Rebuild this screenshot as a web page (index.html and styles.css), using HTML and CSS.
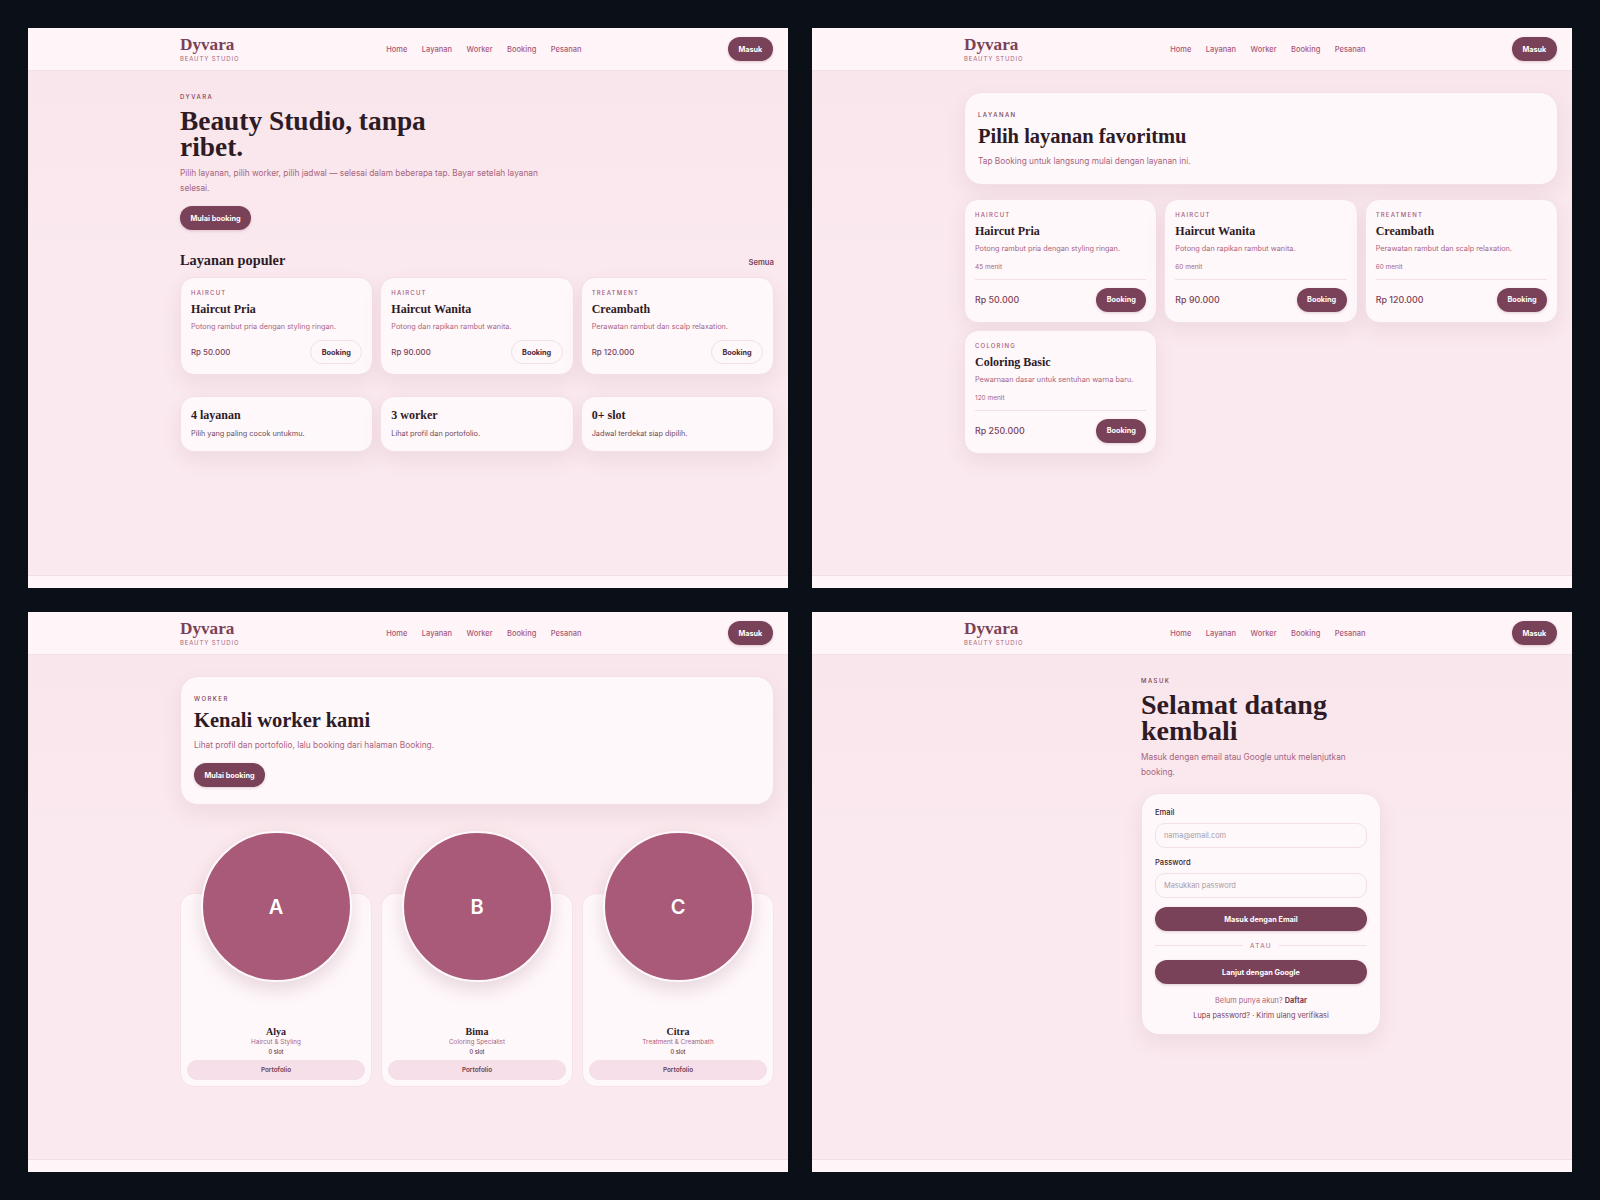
FILE: index.html
```html
<!DOCTYPE html>
<html lang="id">
<head>
    <meta charset="UTF-8">
    <title>Dyvara Beauty Studio</title>
    <link rel="stylesheet" href="styles.css">
</head>
<body>
    <div class="board">

        <!-- Home -->
        <section class="panel">
            <header class="topbar">
                <div class="brand"><div class="brand-name">Dyvara</div><div class="brand-sub">BEAUTY STUDIO</div></div>
                <nav class="nav"><a>Home</a><a>Layanan</a><a>Worker</a><a>Booking</a><a>Pesanan</a></nav>
                <button class="btn">Masuk</button>
            </header>
            <main class="content home">
                <div class="eyebrow">DYVARA</div>
                <h1 class="title">Beauty Studio, tanpa ribet.</h1>
                <p class="lead">Pilih layanan, pilih worker, pilih jadwal — selesai dalam beberapa tap. Bayar setelah layanan selesai.</p>
                <button class="btn btn-start">Mulai booking</button>
                <div class="section-head">
                    <h2>Layanan populer</h2>
                    <a>Semua</a>
                </div>
                <div class="grid-three">
                    <div class="card popular">
                        <div class="cat">HAIRCUT</div>
                        <h3>Haircut Pria</h3>
                        <p class="desc">Potong rambut pria dengan styling ringan.</p>
                        <div class="card-foot"><span class="price">Rp 50.000</span><button class="btn btn-ghost">Booking</button></div>
                    </div>
                    <div class="card popular">
                        <div class="cat">HAIRCUT</div>
                        <h3>Haircut Wanita</h3>
                        <p class="desc">Potong dan rapikan rambut wanita.</p>
                        <div class="card-foot"><span class="price">Rp 90.000</span><button class="btn btn-ghost">Booking</button></div>
                    </div>
                    <div class="card popular">
                        <div class="cat">TREATMENT</div>
                        <h3>Creambath</h3>
                        <p class="desc">Perawatan rambut dan scalp relaxation.</p>
                        <div class="card-foot"><span class="price">Rp 120.000</span><button class="btn btn-ghost">Booking</button></div>
                    </div>
                </div>
                <div class="grid-three stats">
                    <div class="card stat"><h3>4 layanan</h3><p>Pilih yang paling cocok untukmu.</p></div>
                    <div class="card stat"><h3>3 worker</h3><p>Lihat profil dan portofolio.</p></div>
                    <div class="card stat"><h3>0+ slot</h3><p>Jadwal terdekat siap dipilih.</p></div>
                </div>
            </main>
            <footer class="bottom"></footer>
        </section>

        <!-- Layanan -->
        <section class="panel">
            <header class="topbar">
                <div class="brand"><div class="brand-name">Dyvara</div><div class="brand-sub">BEAUTY STUDIO</div></div>
                <nav class="nav"><a>Home</a><a>Layanan</a><a>Worker</a><a>Booking</a><a>Pesanan</a></nav>
                <button class="btn">Masuk</button>
            </header>
            <main class="content">
                <div class="hero hero-services">
                    <div class="eyebrow">LAYANAN</div>
                    <h1 class="hero-title">Pilih layanan favoritmu</h1>
                    <p class="hero-lead">Tap Booking untuk langsung mulai dengan layanan ini.</p>
                </div>
                <div class="grid-three services">
                    <div class="card service">
                        <div class="cat">HAIRCUT</div>
                        <h3>Haircut Pria</h3>
                        <p class="desc">Potong rambut pria dengan styling ringan.</p>
                        <p class="mins">45 menit</p>
                        <div class="card-foot"><span class="price">Rp 50.000</span><button class="btn">Booking</button></div>
                    </div>
                    <div class="card service">
                        <div class="cat">HAIRCUT</div>
                        <h3>Haircut Wanita</h3>
                        <p class="desc">Potong dan rapikan rambut wanita.</p>
                        <p class="mins">60 menit</p>
                        <div class="card-foot"><span class="price">Rp 90.000</span><button class="btn">Booking</button></div>
                    </div>
                    <div class="card service">
                        <div class="cat">TREATMENT</div>
                        <h3>Creambath</h3>
                        <p class="desc">Perawatan rambut dan scalp relaxation.</p>
                        <p class="mins">60 menit</p>
                        <div class="card-foot"><span class="price">Rp 120.000</span><button class="btn">Booking</button></div>
                    </div>
                    <div class="card service">
                        <div class="cat">COLORING</div>
                        <h3>Coloring Basic</h3>
                        <p class="desc">Pewarnaan dasar untuk sentuhan warna baru.</p>
                        <p class="mins">120 menit</p>
                        <div class="card-foot"><span class="price">Rp 250.000</span><button class="btn">Booking</button></div>
                    </div>
                </div>
            </main>
            <footer class="bottom"></footer>
        </section>

        <!-- Worker -->
        <section class="panel">
            <header class="topbar">
                <div class="brand"><div class="brand-name">Dyvara</div><div class="brand-sub">BEAUTY STUDIO</div></div>
                <nav class="nav"><a>Home</a><a>Layanan</a><a>Worker</a><a>Booking</a><a>Pesanan</a></nav>
                <button class="btn">Masuk</button>
            </header>
            <main class="content">
                <div class="hero">
                    <div class="eyebrow">WORKER</div>
                    <h1 class="hero-title">Kenali worker kami</h1>
                    <p class="hero-lead">Lihat profil dan portofolio, lalu booking dari halaman Booking.</p>
                    <button class="btn btn-hero">Mulai booking</button>
                </div>
                <div class="workers">
                    <div class="worker">
                        <div class="avatar">A</div>
                        <div class="worker-name">Alya</div>
                        <div class="worker-role">Haircut &amp; Styling</div>
                        <div class="worker-slot">0 slot</div>
                        <button class="btn-soft">Portofolio</button>
                    </div>
                    <div class="worker">
                        <div class="avatar">B</div>
                        <div class="worker-name">Bima</div>
                        <div class="worker-role">Coloring Specialist</div>
                        <div class="worker-slot">0 slot</div>
                        <button class="btn-soft">Portofolio</button>
                    </div>
                    <div class="worker">
                        <div class="avatar">C</div>
                        <div class="worker-name">Citra</div>
                        <div class="worker-role">Treatment &amp; Creambath</div>
                        <div class="worker-slot">0 slot</div>
                        <button class="btn-soft">Portofolio</button>
                    </div>
                </div>
            </main>
            <footer class="bottom"></footer>
        </section>

        <!-- Masuk -->
        <section class="panel">
            <header class="topbar">
                <div class="brand"><div class="brand-name">Dyvara</div><div class="brand-sub">BEAUTY STUDIO</div></div>
                <nav class="nav"><a>Home</a><a>Layanan</a><a>Worker</a><a>Booking</a><a>Pesanan</a></nav>
                <button class="btn">Masuk</button>
            </header>
            <main class="content">
                <div class="login">
                    <div class="eyebrow">MASUK</div>
                    <h1 class="title">Selamat datang kembali</h1>
                    <p class="lead">Masuk dengan email atau Google untuk melanjutkan booking.</p>
                    <form class="card login-card">
                        <label class="field-label">Email</label>
                        <input class="field" type="text" placeholder="nama@email.com">
                        <label class="field-label">Password</label>
                        <input class="field" type="text" placeholder="Masukkan password">
                        <button class="btn btn-wide" type="button">Masuk dengan Email</button>
                        <div class="divider">ATAU</div>
                        <button class="btn btn-wide" type="button">Lanjut dengan Google</button>
                        <p class="login-note">Belum punya akun? <b>Daftar</b></p>
                        <p class="login-links">Lupa password? · Kirim ulang verifikasi</p>
                    </form>
                </div>
            </main>
            <footer class="bottom"></footer>
        </section>

    </div>
</body>
</html>
```

FILE: styles.css
```css
/* General Styles */
* {
    box-sizing: border-box;
    margin: 0;
    padding: 0;
    font-family: 'Inter', 'Liberation Sans', sans-serif;
}

body {
    background-color: #0a0f18;
    color: #2e1b26;
    width: 1600px;
    height: 1200px;
    overflow: hidden;
}

.board {
    display: grid;
    grid-template-columns: 760px 760px;
    grid-template-rows: 560px 560px;
    gap: 24px;
    padding: 28px;
}

.panel {
    display: flex;
    flex-direction: column;
    overflow: hidden;
    background-color: #fae9ee;
}

/* Top bar */
.topbar {
    display: flex;
    justify-content: space-between;
    align-items: center;
    height: 43px;
    padding: 0 15px 0 152px;
    background-color: #fff5f8;
    border-bottom: 1px solid #f3dfe7;
}

.brand {
    width: 60px;
    white-space: nowrap;
}

.brand-name {
    font-family: 'Liberation Serif', serif;
    font-weight: 700;
    font-size: 17.2px;
    line-height: 19px;
    color: #7a4259;
}

.brand-sub {
    font-size: 6px;
    line-height: 9px;
    letter-spacing: 0.14em;
    color: #a8647f;
}

.nav {
    display: flex;
    gap: 14.5px;
}

.nav a {
    font-size: 7.5px;
    font-weight: 500;
    color: #a8587a;
}

.btn {
    height: 24px;
    padding: 0 10.7px;
    border: none;
    border-radius: 12px;
    background-color: #7a4259;
    color: #fff;
    font-size: 7.3px;
    font-weight: 700;
    box-shadow: 0 1px 3px rgba(122, 66, 89, 0.25);
}

/* Main area */
.content {
    flex: 1;
    padding: 21px 14px 0 152px;
    background: linear-gradient(#f9e6ec, #fae9ee 200px);
}

.eyebrow {
    font-size: 6px;
    font-weight: 500;
    line-height: 10px;
    letter-spacing: 0.24em;
    color: #7a4259;
}

.title {
    width: 300px;
    margin-top: 6px;
    font-family: 'Liberation Serif', serif;
    font-size: 27.4px;
    font-weight: 700;
    line-height: 26px;
    color: #2e1b26;
}

.lead {
    width: 360px;
    margin-top: 6px;
    font-size: 8.3px;
    line-height: 15px;
    color: #a8647f;
}

.btn-start {
    display: block;
    margin-top: 10px;
    width: 71px;
    padding: 0;
}

.section-head {
    display: flex;
    justify-content: space-between;
    align-items: flex-end;
    margin-top: 20px;
    margin-bottom: 7px;
}

.section-head h2 {
    font-family: 'Liberation Serif', serif;
    font-size: 14.3px;
    line-height: 20px;
    font-weight: 700;
}

.section-head a {
    font-size: 7.7px;
    font-weight: 600;
    line-height: 14px;
    color: #7a4259;
}

.grid-three {
    display: grid;
    grid-template-columns: repeat(3, 1fr);
    gap: 7px;
}

.card {
    background-color: #fff8fb;
    border: 1px solid #f3dfe7;
    border-radius: 14px;
    box-shadow: 0 8px 20px rgba(122, 66, 89, 0.09);
}

.cat {
    font-size: 6px;
    line-height: 10px;
    font-weight: 500;
    letter-spacing: 0.2em;
    color: #a8587a;
}

.card h3 {
    font-family: 'Liberation Serif', serif;
    font-weight: 700;
    color: #2e1b26;
}

.desc {
    font-size: 7.3px;
    color: #a8647f;
}

.price {
    font-weight: 500;
    color: #7a4259;
}

.card-foot {
    display: flex;
    justify-content: space-between;
    align-items: center;
}

.popular {
    height: 98px;
    padding: 10px 10px 0;
}

.popular h3 {
    margin-top: 3px;
    font-size: 12px;
    line-height: 16px;
}

.popular .desc {
    margin-top: 3px;
    line-height: 14px;
}

.popular .card-foot {
    margin-top: 6px;
}

.popular .price {
    font-size: 7.9px;
}

.btn-ghost {
    width: 52px;
    padding: 0;
    background-color: #fff8fb;
    border: 1px solid #f3dfe7;
    color: #4a2a3a;
    box-shadow: none;
}

.stats {
    margin-top: 21px;
}

.stat {
    height: 56px;
    padding: 10px;
}

.stat h3 {
    font-size: 12px;
    line-height: 16px;
}

.stat p {
    margin-top: 5px;
    font-size: 7.3px;
    line-height: 12px;
    color: #6d4a5a;
}

.bottom {
    height: 13px;
    background-color: #fff5f8;
    border-top: 1px solid #f3dfe7;
}

/* Page hero */
.hero {
    height: 129px;
    padding: 17px 13px 0;
    background-color: #fff8fb;
    border: 1px solid #f3dfe7;
    border-radius: 18px;
    box-shadow: 0 8px 20px rgba(122, 66, 89, 0.09);
}

.hero-services {
    height: 93px;
}

.hero-title {
    margin-top: 3px;
    font-family: 'Liberation Serif', serif;
    font-size: 20.5px;
    line-height: 26px;
    font-weight: 700;
}

.hero-lead {
    margin-top: 5px;
    font-size: 8.3px;
    line-height: 14px;
    color: #a8647f;
}

.btn-hero {
    display: block;
    width: 71px;
    padding: 0;
    margin-top: 11px;
}

/* Service cards */
.services {
    margin-top: 13.5px;
}

.service {
    height: 124px;
    padding: 10px 10px 0;
}

.service h3 {
    margin-top: 3px;
    font-size: 12px;
    line-height: 16px;
}

.service .desc {
    margin-top: 3px;
    line-height: 14px;
}

.mins {
    margin-top: 5px;
    font-size: 6.5px;
    line-height: 12px;
    color: #a8647f;
}

.service .card-foot {
    margin-top: 6px;
    padding-top: 8px;
    border-top: 1px solid #f3dfe7;
}

.service .price {
    font-size: 8.9px;
}

.service .btn {
    width: 50px;
    padding: 0;
}

/* Worker cards */
.workers {
    display: grid;
    grid-template-columns: repeat(3, 1fr);
    gap: 9px;
    margin-top: 88px;
}

.worker {
    height: 194px;
    padding: 0 6px;
    text-align: center;
    background-color: #fff8fb;
    border: 1px solid #f6e3ea;
    border-radius: 14px;
}

.avatar {
    display: flex;
    justify-content: center;
    align-items: center;
    width: 151px;
    height: 151px;
    margin: -63px auto 0;
    border: 2px solid #fff8fb;
    border-radius: 50%;
    background-color: #a85a78;
    box-shadow: 0 8px 18px rgba(122, 66, 89, 0.18);
    color: #fff;
    font-size: 20px;
    font-weight: 600;
}

.worker-name {
    margin-top: 43px;
    font-family: 'Liberation Serif', serif;
    font-size: 10px;
    font-weight: 700;
    line-height: 13px;
}

.worker-role {
    font-size: 6.35px;
    line-height: 9px;
    color: #a8647f;
}

.worker-slot {
    font-size: 5.7px;
    line-height: 9px;
    font-weight: 500;
    color: #5d3a4a;
}

.btn-soft {
    display: block;
    width: 100%;
    height: 20px;
    margin-top: 4px;
    border: 1px solid #f3dfe7;
    border-radius: 10px;
    background-color: #f6dfe8;
    color: #6d3f54;
    font-size: 6.4px;
    font-weight: 600;
}

/* Login */
.login {
    width: 240px;
    margin: 0 auto;
}

.login .title {
    width: 215px;
    font-size: 28px;
}

.login .lead {
    width: 215px;
}

.login-card {
    margin-top: 13px;
    padding: 13px;
    border-radius: 18px;
    height: 242px;
}

.field-label {
    display: block;
    font-size: 7.6px;
    font-weight: 500;
    line-height: 12px;
    color: #3e2531;
}

.field {
    display: block;
    width: 100%;
    height: 25px;
    margin: 4px 0 9px;
    padding: 0 8px;
    background-color: #fff8fb;
    border: 1px solid #f3dfe7;
    border-radius: 10px;
    font-size: 7.4px;
    outline: none;
}

.field::placeholder {
    color: #a99aa2;
}

.btn-wide {
    display: block;
    width: 100%;
}

.divider {
    display: flex;
    align-items: center;
    gap: 7px;
    height: 29px;
    font-size: 6.5px;
    letter-spacing: 0.2em;
    color: #a8647f;
}

.divider::before,
.divider::after {
    content: "";
    flex: 1;
    height: 1px;
    background-color: #f3dfe7;
}

.login-note {
    margin-top: 9px;
    font-size: 7.35px;
    line-height: 15px;
    text-align: center;
    color: #a8647f;
}

.login-note b {
    font-weight: 700;
    color: #7a4259;
}

.login-links {
    font-size: 7.35px;
    line-height: 15px;
    text-align: center;
    color: #7a4259;
}
```
